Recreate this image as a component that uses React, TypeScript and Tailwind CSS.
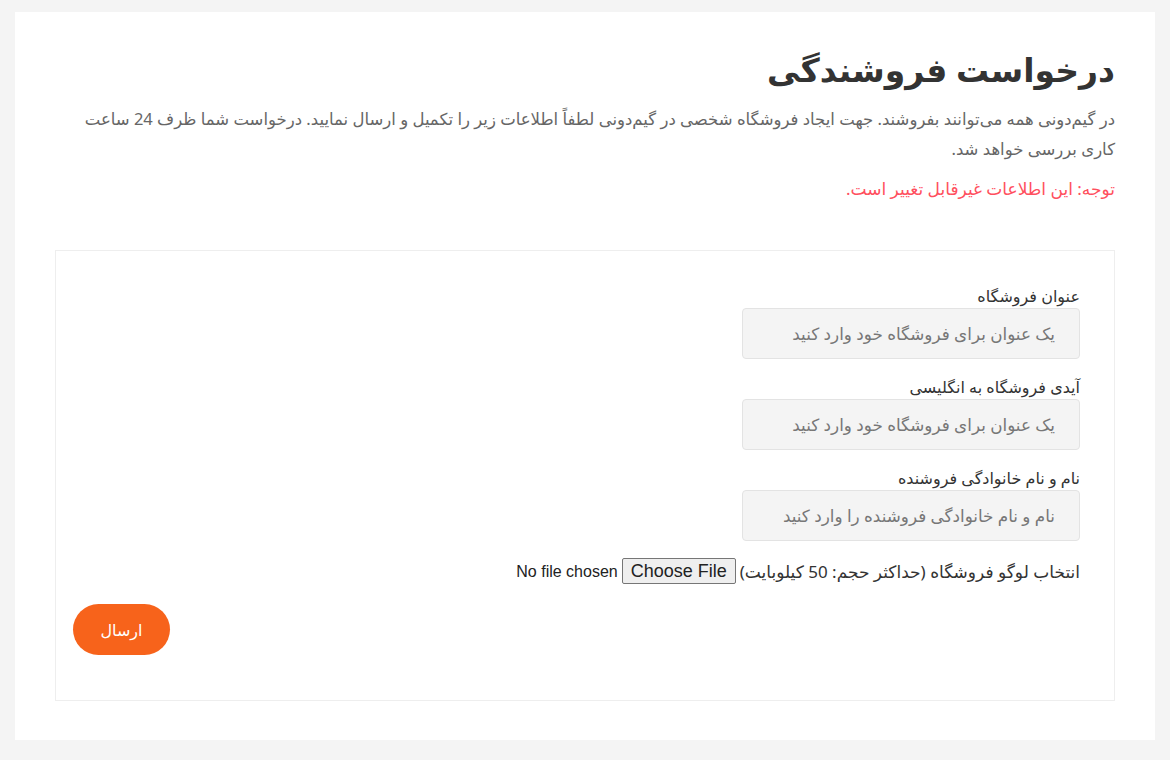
const fields = [
  { label: "عنوان فروشگاه", placeholder: "یک عنوان برای فروشگاه خود وارد کنید" },
  { label: "آیدی فروشگاه به انگلیسی", placeholder: "یک عنوان برای فروشگاه خود وارد کنید" },
  { label: "نام و نام خانوادگی فروشنده", placeholder: "نام و نام خانوادگی فروشنده را وارد کنید" },
];

const App = () => {
  return (
    <div
      dir="rtl"
      className="min-h-[760px] bg-[#f4f4f4] pt-[12px] pb-[20px] px-[15px] text-[#333]"
      style={{ fontFamily: '"Noto Sans", "DejaVu Sans", sans-serif' }}
    >
      <div className="bg-white px-[40px] pt-[36px] pb-[39px]">
        <h1 className="text-[33px] font-bold leading-[44px] text-[#333]">درخواست فروشندگی</h1>
        <p className="mt-[12px] text-[16.5px] leading-[30px] text-[#666]">
          در گیم‌دونی همه می‌توانند بفروشند. جهت ایجاد فروشگاه شخصی در گیم‌دونی لطفاً اطلاعات زیر را تکمیل و ارسال نمایید. درخواست شما ظرف 24 ساعت کاری بررسی خواهد شد.
        </p>
        <p className="mt-[10px] text-[17px] leading-[30px] text-[#ff4f5e]">توجه: این اطلاعات غیرقابل تغییر است.</p>

        <form className="mt-[46px] border border-[#eee] px-[17px] pt-[34px] pb-[45px] flex flex-col" onSubmit={(e) => e.preventDefault()}>
          <div className="pr-[17px] flex flex-col gap-[17px]">
            {fields.map((f) => (
              <div key={f.label} className="flex flex-col items-start">
                <label className="text-[16px] leading-[22px] text-[#333]">{f.label}</label>
                <input
                  type="text"
                  placeholder={f.placeholder}
                  className="mt-[1px] w-[338px] h-[51px] rounded-[4px] border border-[#e3e3e3] bg-[#f4f4f4] px-[24px] text-[16.8px] placeholder:text-[#777] outline-none"
                />
              </div>
            ))}
            <div className="flex items-center gap-[4px] text-[17px] leading-[26px]">
              <span>انتخاب لوگو فروشگاه (حداکثر حجم: 50 کیلوبایت)</span>
              <input
                type="file"
                className="text-[16px] text-[#222] file:text-[18px] file:leading-[22px] file:border file:border-[#767676] file:bg-[#efefef] file:px-[8px] file:py-[1px] file:rounded-[2px] file:ml-[4px]"
                style={{ fontFamily: '"Liberation Sans", Arial, sans-serif' }}
              />
            </div>
          </div>
          <button
            type="submit"
            className="mt-[19px] self-end w-[97px] h-[51px] rounded-full bg-[#f7631b] text-white text-[16px]"
          >
            ارسال
          </button>
        </form>
      </div>
    </div>
  );
};

export default App;
